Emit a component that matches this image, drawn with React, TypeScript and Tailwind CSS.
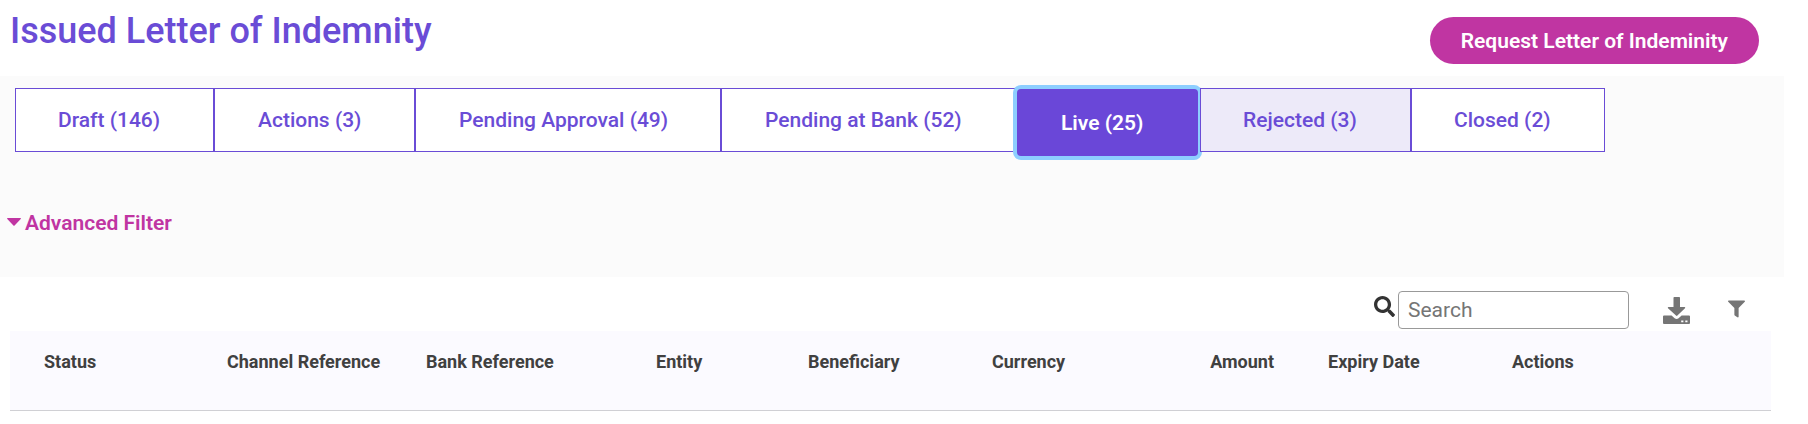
import { useState } from 'react';
import { FaFilter, FaSearch } from 'react-icons/fa';

const tabs = [
  { label: 'Draft', count: 146, size: 'w-[199px] pl-[42px]' },
  { label: 'Actions', count: 3, size: 'w-[201px] pl-[43px]' },
  { label: 'Pending Approval', count: 49, size: 'w-[306px] pl-[43px]' },
  { label: 'Pending at Bank', count: 52, size: 'w-[296px] pl-[43px]' },
  { label: 'Live', count: 25, size: 'w-[181px] pl-[44px]' },
  { label: 'Rejected', count: 3, size: 'w-[211px] pl-[42px]' },
  { label: 'Closed', count: 2, size: 'w-[194px] pl-[42px]' },
];

const columns = [
  { label: 'Status', width: 'w-[205px]', cell: 'pl-[34px] text-left' },
  { label: 'Channel Reference', width: 'w-[199px]', cell: 'pl-3 text-left' },
  { label: 'Bank Reference', width: 'w-[230px]', cell: 'pl-3 text-left' },
  { label: 'Entity', width: 'w-[152px]', cell: 'pl-3 text-left' },
  { label: 'Beneficiary', width: 'w-[184px]', cell: 'pl-3 text-left' },
  { label: 'Currency', width: 'w-[180px]', cell: 'pl-3 text-left' },
  { label: 'Amount', width: 'w-[156px]', cell: 'pr-[42px] text-right' },
  { label: 'Expiry Date', width: 'w-[184px]', cell: 'pl-3 text-left' },
  { label: 'Actions', width: 'w-[271px]', cell: 'pl-3 text-left' },
];

function DownloadIcon() {
  return (
    <svg viewBox="0 0 27 27" className="h-[27px] w-[27px]" fill="currentColor" aria-hidden="true">
      <path d="M10.5 0.8Q10.5 0 11.3 0H16.2Q17 0 17 0.8V10H21.6Q22.8 10.2 22 11.2L14.4 18.6Q13.7 19.2 13 18.6L5 11.2Q4.300 10.200 5.400 10H10.500Z" />
      <path
        fillRule="evenodd"
        d="M1 18.500H8.600L11.600 21.200Q13.600 22.800 15.600 21.200L18.600 18.500H26Q27 18.500 27 19.500V26Q27 27 26 27H1Q0 27 0 26V19.500Q0 18.500 1 18.500ZM18.200 23.400V25.200H20.400V23.400ZM22.300 23.400V25.200H24.500V23.400Z"
      />
    </svg>
  );
}

function CaretIcon() {
  return (
    <svg viewBox="0 0 14 8" className="mb-[3px] h-2 w-3.5" fill="currentColor" aria-hidden="true">
      <path d="M0.600 0H13.400Q14.300 0.300 13.700 1L7.600 7.500Q7 8.100 6.400 7.500L0.300 1Q-0.300 0.300 0.600 0Z" />
    </svg>
  );
}

export default function App() {
  const [active, setActive] = useState('Live');
  const [query, setQuery] = useState('');

  return (
    <main className="bg-white font-['Roboto',sans-serif] text-[#404040]">
      <header className="flex h-[76px] items-start justify-between pr-[49px] pl-2.5">
        <h1 className="pt-2 text-[36px] leading-[46px] font-medium text-[#6a4cd6]">Issued Letter of Indemnity</h1>
        <button
          type="button"
          className="mt-[17px] h-[47px] rounded-full bg-[#c035a2] px-[31px] pt-0.5 text-[21px] font-semibold whitespace-nowrap text-white"
        >
          Request Letter of Indeminity
        </button>
      </header>

      <section className="mr-6 h-[201px] bg-[#fbfbfb] pt-3">
        <nav className="flex h-[68px] items-start pl-[15px]" aria-label="Letter status">
          {tabs.map((tab) => (
            <button
              key={tab.label}
              type="button"
              aria-pressed={tab.label === active}
              onClick={() => setActive(tab.label)}
              className={`${tab.size} shrink-0 pt-0.5 text-left text-[21px] whitespace-nowrap ${
                tab.label === active
                  ? 'mt-px mr-0.5 h-[67px] rounded-[4px] bg-[#6a47d8] font-semibold text-white ring-4 ring-[#8dceff]'
                  : tab.label === 'Rejected'
                    ? 'h-16 border border-[#6a4cd6] bg-[#edeaf9] font-medium text-[#6a4cd6]'
                    : 'h-16 border border-[#6a4cd6] bg-white font-medium text-[#6a4cd6]'
              }`}
            >
              {tab.label} ({tab.count})
            </button>
          ))}
        </nav>
        <button
          type="button"
          className="mt-[51px] ml-[7px] flex items-center gap-1 text-[21px] leading-8 font-semibold text-[#c035a2]"
        >
          <CaretIcon />
          Advanced Filter
        </button>
      </section>

      <section className="pr-[37px] pl-2.5">
        <div className="flex h-[54px] items-start justify-end pt-3.5 pr-[26px] text-[#757575]">
          <label htmlFor="search" className="pt-[5px] pr-[3px]">
            <FaSearch className="h-[21px] w-[21px] text-[#333]" aria-hidden="true" />
          </label>
          <input
            id="search"
            type="text"
            aria-label="Search"
            placeholder="Search"
            value={query}
            onChange={(e) => setQuery(e.target.value)}
            className="h-[38px] w-[231px] rounded-[4px] border border-[#999] bg-white px-[9px] text-[21px] text-[#404040] placeholder:text-[#757575]"
          />
          <button type="button" aria-label="Download" className="mt-[6px] ml-[34px]">
            <DownloadIcon />
          </button>
          <button type="button" aria-label="Filter" className="mt-[9px] ml-[38px]">
            <FaFilter className="h-[18px] w-[17px]" />
          </button>
        </div>
        <table className="w-full table-fixed border-collapse">
          <thead className="bg-[#fbfaff]">
            <tr className="h-[79px] border-b border-[#d0d0d4]">
              {columns.map((column) => (
                <th
                  key={column.label}
                  scope="col"
                  className={`${column.width} ${column.cell} pb-4 text-[18px] leading-6 font-bold whitespace-nowrap`}
                >
                  {column.label}
                </th>
              ))}
            </tr>
          </thead>
        </table>
      </section>
    </main>
  );
}
